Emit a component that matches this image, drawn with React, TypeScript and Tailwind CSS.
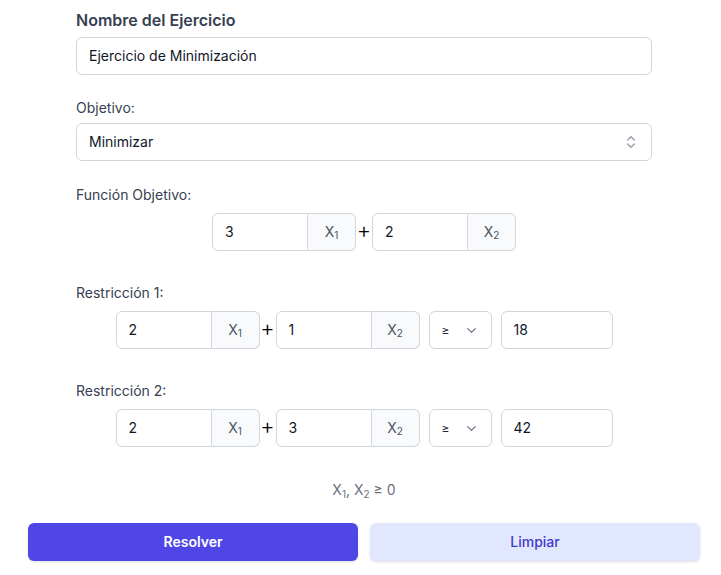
import { ChevronDown, ChevronsUpDown } from 'lucide-react';

const Var = ({ n }: { n: number }) => (
  <span className="w-12 h-full flex items-center justify-center border-y border-r border-gray-300 rounded-r-md bg-gray-50 text-gray-600 text-sm">
    X<sub className="text-[10px]">{n}</sub>
  </span>
);

const Term = ({ value, n }: { value: string; n: number }) => (
  <div className="flex w-[144px] h-[38px]">
    <div className="flex-1 flex items-center px-3 border border-gray-300 rounded-l-md bg-white text-sm text-gray-900">{value}</div>
    <Var n={n} />
  </div>
);

const Plus = () => (
  <span className="w-4 flex justify-center text-[22px] font-light leading-none text-black relative -top-[2px]">+</span>
);

const Restriction = ({ label, a, b, rhs }: { label: string; a: string; b: string; rhs: string }) => (
  <div className="mt-[32px]">
    <p className="text-sm leading-5 text-gray-700 mb-2">{label}</p>
    <div className="flex items-center justify-center">
      <Term value={a} n={1} />
      <Plus />
      <Term value={b} n={2} />
      <div className="ml-[9px] w-[63px] h-[38px] flex items-center justify-between pl-3 pr-3 border border-gray-300 rounded-md text-xs text-gray-800">
        <span>≥</span>
        <ChevronDown size={15} className="text-gray-500" />
      </div>
      <div className="ml-[9px] w-[112px] h-[38px] flex items-center px-3 border border-gray-300 rounded-md text-sm text-gray-900">{rhs}</div>
    </div>
  </div>
);

export default function App() {
  return (
    <div className="min-h-screen bg-white font-['Inter',sans-serif]">
      <div className="w-[672px] ml-7 pt-2">
        <div className="px-12">
          <h2 className="text-base leading-6 font-semibold text-gray-700 mb-[5px]">Nombre del Ejercicio</h2>
          <div className="h-[38px] flex items-center px-3 border border-gray-300 rounded-md text-sm text-gray-900">Ejercicio de Minimización</div>

          <p className="mt-[23px] text-sm leading-5 text-gray-700 mb-[5px]">Objetivo:</p>
          <div className="h-[38px] flex items-center justify-between pl-3 pr-[12px] border border-gray-300 rounded-md text-sm text-gray-900">
            <span>Minimizar</span>
            <ChevronsUpDown size={16} strokeWidth={2.25} className="text-gray-400" />
          </div>

          <p className="mt-6 text-sm leading-5 text-gray-700 mb-2">Función Objetivo:</p>
          <div className="flex items-center justify-center">
            <Term value="3" n={1} />
            <Plus />
            <Term value="2" n={2} />
          </div>

          <Restriction label="Restricción 1:" a="2" b="1" rhs="18" />
          <Restriction label="Restricción 2:" a="2" b="3" rhs="42" />

          <p className="mt-[33px] text-center text-sm leading-5 text-gray-500">
            X<sub className="text-[10px]">1</sub>, X<sub className="text-[10px]">2</sub> ≥ 0
          </p>
        </div>

        <div className="mt-[23px] grid grid-cols-2 gap-3">
          <button className="h-[38px] rounded-md bg-[#4f46e5] text-white text-sm font-semibold shadow-sm">Resolver</button>
          <button className="h-[38px] rounded-md bg-[#e0e7ff] text-[#4338ca] text-sm font-medium shadow-sm">Limpiar</button>
        </div>
      </div>
    </div>
  );
}
